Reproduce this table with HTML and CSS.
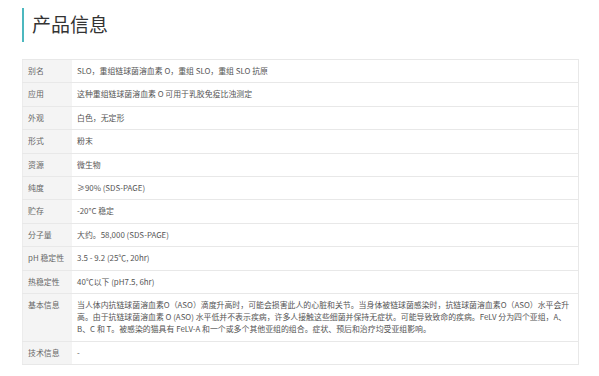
FILE: index.html
```html
<!DOCTYPE html>
<html lang="zh-CN">
<head>
<meta charset="utf-8">
<title>产品信息</title>
<link rel="stylesheet" href="styles.css">
</head>
<body>
<div class="page">
  <h2 class="title">产品信息</h2>
  <table class="info">
    <tr><th>别名</th><td>SLO，重组链球菌溶血素 O，重组 SLO，重组 SLO 抗原</td></tr>
    <tr><th>应用</th><td>这种重组链球菌溶血素 O 可用于乳胶免疫比浊测定</td></tr>
    <tr><th>外观</th><td>白色，无定形</td></tr>
    <tr><th>形式</th><td>粉末</td></tr>
    <tr><th>资源</th><td>微生物</td></tr>
    <tr><th>纯度</th><td>≥90% (SDS-PAGE)</td></tr>
    <tr><th>贮存</th><td>-20°C 稳定</td></tr>
    <tr><th>分子量</th><td>大约。58,000 (SDS-PAGE)</td></tr>
    <tr><th>pH 稳定性</th><td>3.5 - 9.2 (25℃, 20hr)</td></tr>
    <tr><th>热稳定性</th><td>40℃以下 (pH7.5, 6hr)</td></tr>
    <tr><th>基本信息</th><td>当人体内抗链球菌溶血素O（ASO）滴度升高时，可能会损害此人的心脏和关节。当身体被链球菌感染时，抗链球菌溶血素O（ASO）水平会升<br>高。由于抗链球菌溶血素 O (ASO) 水平低并不表示疾病，许多人接触这些细菌并保持无症状。可能导致致命的疾病。FeLV 分为四个亚组，A、<br>B、C 和 T。被感染的猫具有 FeLV-A 和一个或多个其他亚组的组合。症状、预后和治疗均受亚组影响。</td></tr>
    <tr><th>技术信息</th><td>-</td></tr>
  </table>
</div>
</body>
</html>
```
FILE: styles.css
```css
html, body {
  margin: 0;
  padding: 0;
  background: #fff;
}
body {
  font-family: "Noto Sans CJK SC", sans-serif;
}
.page {
  padding: 8px 20px 0 22px;
}
.title {
  margin: 0;
  height: 34px;
  border-left: 2px solid #4cb8bf;
  padding-left: 8px;
  font-family: "Noto Sans CJK SC", sans-serif;
  font-weight: normal;
  font-size: 19px;
  line-height: 32px;
  color: #333;
}
.info {
  margin-top: 17px;
  width: 557px;
  border-collapse: collapse;
  font-size: 7.9px;
  line-height: 12.2px;
  color: #555;
}
.info th,
.info td {
  border-top: 1px solid #e8e8e8;
  border-bottom: 1px solid #e8e8e8;
  padding: 5.1px 5px;
  text-align: left;
  vertical-align: top;
  font-weight: normal;
  white-space: nowrap;
}
.info th {
  width: 39px;
  background: #f4f4f4;
  color: #666;
  border-left: 1px solid #ececec;
}
.info td {
  padding-left: 5px;
  border-right: 1px solid #e8e8e8;
}
```
